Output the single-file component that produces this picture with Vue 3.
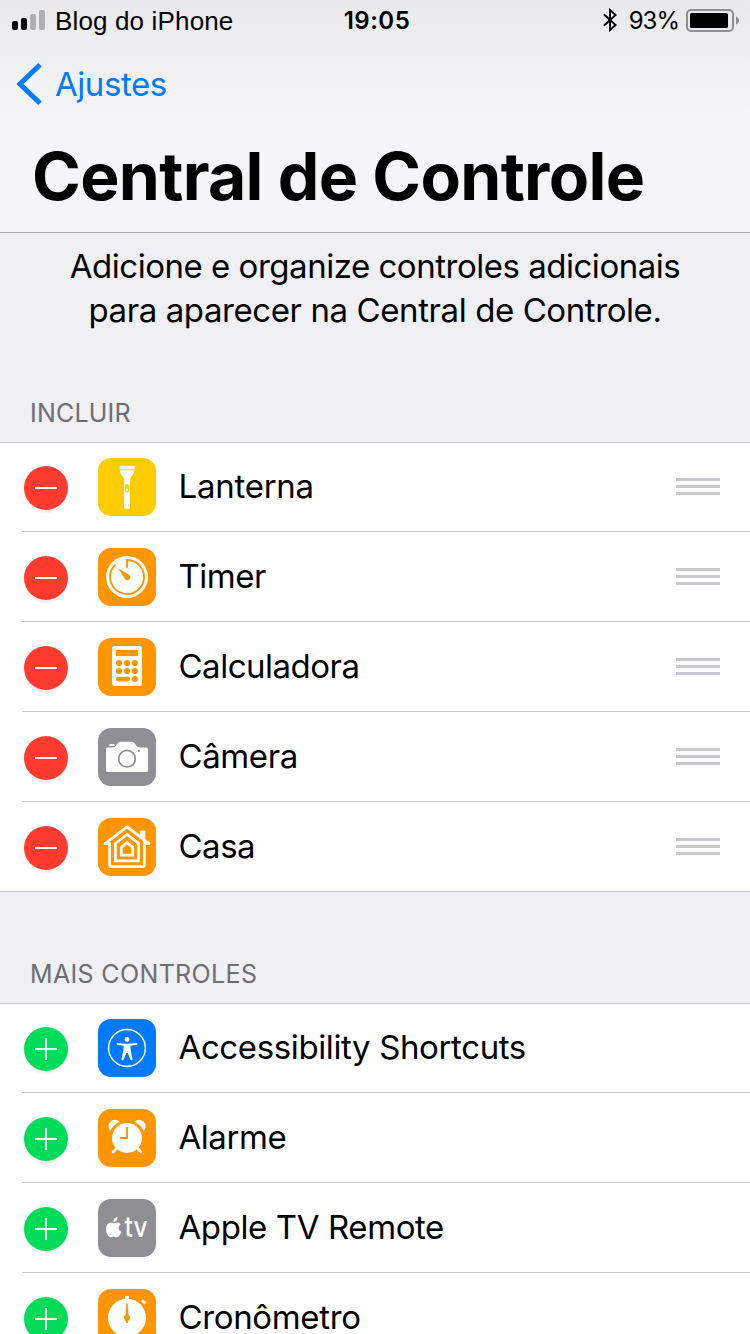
<template>
  <div class="screen">
    <header class="header">
      <div class="status-bar">
        <div class="status-left">
          <svg class="signal" width="33" height="20" viewBox="0 0 33 20">
            <rect x="0" y="11" width="6" height="9" rx="2" fill="#000" />
            <rect x="9" y="8" width="6" height="12" rx="2" fill="#000" />
            <rect x="18" y="4" width="6" height="16" rx="2" fill="#b0b0b2" />
            <rect x="27" y="0" width="6" height="20" rx="2" fill="#b0b0b2" />
          </svg>
          <span class="carrier">Blog do iPhone</span>
        </div>
        <span class="clock">19:05</span>
        <div class="status-right">
          <svg class="bluetooth" width="14" height="24" viewBox="0 0 14 24">
            <path d="M.8 6.2 12.6 17 7 22V2l5.6 5L.8 17.8" fill="none" stroke="#000" stroke-width="1.9" />
          </svg>
          <span class="percent">93%</span>
          <svg class="battery" width="53" height="23" viewBox="0 0 53 23">
            <rect x="1" y="1" width="46" height="21" rx="4" fill="none" stroke="#909092" stroke-width="2" />
            <rect x="4" y="4" width="38" height="15" rx="1.5" fill="#000" />
            <path d="M50 7.5c4 1.5 4 6.500 0 8z" fill="#909092" />
          </svg>
        </div>
      </div>
      <div class="nav-bar">
        <svg class="chevron" width="27" height="42" viewBox="0 0 27 42">
          <path d="M24 1.800 4 21 24 40.200" fill="none" stroke="#007aff" stroke-width="5" />
        </svg>
        <span class="back">Ajustes</span>
      </div>
      <h1 class="title">Central de Controle</h1>
    </header>

    <p class="intro">
      <span class="intro-first">Adicione e organize controles adicionais</span><br />
      <span class="intro-second">para aparecer na Central de Controle.</span>
    </p>

    <section v-for="section in sections" :key="section.title" class="section">
      <h2 class="section-title" :class="section.action">{{ section.title }}</h2>
      <ul class="list">
        <li v-for="item in section.items" :key="item.name" class="row">
          <span class="action" :class="section.action">
            <svg width="22" height="22" viewBox="0 0 22 22">
              <path :d="section.action === 'remove' ? 'M0 11h22' : 'M0 11h22M11 0v22'" stroke="#fff" stroke-width="2" />
            </svg>
          </span>

          <span class="app-icon" :class="item.color">
            <svg v-if="item.icon === 'flashlight'" viewBox="0 0 58 58" fill="#fff">
              <path d="M22.500 8h13.300q.9 0 .9.900v2.300H21.600V8.900q0-.9.900-.9z" />
              <path d="M21.800 12.300h14.700q-.3 2.500-2.200 4.900-2.300 2.700-2.300 4.800v27.500q0 1.200-1.200 1.200h-3.600q-1.200 0-1.200-1.200V22q0-2.100-2.200-4.800-1.800-2.400-2-4.900z" />
              <rect x="27" y="26" width="4" height="8.400" rx="2" fill="#fc0" />
              <circle cx="29" cy="31.800" r="1.300" />
            </svg>
            <svg v-else-if="item.icon === 'timer'" viewBox="0 0 58 58">
              <circle cx="29" cy="29" r="21" fill="#fff" />
              <path d="M29 19.800V12A17 17 0 1 1 17.400 16.600" fill="none" stroke="#ff9500" stroke-width="1.900" />
              <path d="M20.200 20.200 31.300 27.100A2.900 2.900 0 1 1 27.100 31.300z" fill="#ff9500" />
            </svg>
            <svg v-else-if="item.icon === 'calculator'" viewBox="0 0 58 58">
              <rect x="14" y="8" width="30" height="40" rx="2.500" fill="#fff" />
              <g fill="#ff9500">
                <rect x="17.800" y="12" width="22.200" height="6" rx=".5" />
                <template v-for="y in [25, 33]" :key="y">
                  <circle v-for="x in [21, 29, 36.800]" :key="x" :cx="x" :cy="y" r="3.100" />
                </template>
                <rect x="18" y="38.800" width="14" height="4.600" rx="2.300" />
                <circle cx="36.800" cy="41" r="3.100" />
              </g>
            </svg>
            <svg v-else-if="item.icon === 'camera'" viewBox="0 0 58 58">
              <path d="M9.500 19.500h5.500q2 0 3.200-1.900l1.600-2.300q1-1.500 3-1.500h10.800q2 0 3 1.500l1.600 2.300q1.200 1.900 3.200 1.900h7.100q1.500 0 1.500 1.500v21.500q0 1.500-1.500 1.500h-39Q8 44 8 42.500V21q0-1.500 1.500-1.500z" fill="#fff" />
              <path d="M11 18q0-2 1.700-2h3q1.300 0 1.300 2z" fill="#fff" />
              <circle cx="29" cy="30.700" r="8.300" fill="none" stroke="#8e8e93" stroke-width="1.700" />
              <circle cx="41" cy="23" r="1.100" fill="#8e8e93" />
            </svg>
            <svg v-else-if="item.icon === 'home'" viewBox="0 0 58 58" fill="none" stroke="#fff" stroke-width="2.700" stroke-linejoin="round">
              <path d="M42.200 19v-6h4.600v12z" fill="#fff" stroke-width=".8" />
              <path d="M11.600 25.600H7L29 8.900l22 16.700h-4.600v21.100q0 2-2 2H13.600q-2 0-2-2z" />
              <path d="M17.400 25.500 29 16.500l11.600 9v17.300H17.400z" stroke-linejoin="miter" />
              <path d="M23.300 29.300 29 24.600l5.700 4.700v7.900H23.300z" stroke-linejoin="miter" />
            </svg>
            <svg v-else-if="item.icon === 'accessibility'" viewBox="0 0 58 58" fill="#fff">
              <circle cx="29" cy="29" r="18.400" fill="none" stroke="#fff" stroke-width="1.500" />
              <circle cx="29" cy="20.400" r="2.400" />
              <path d="M19.500 24.100q9.500 1.200 19 0c1.100 0 1.200 1.500.2 1.700l-6.200 1q-.2 3.300.5 6.200l1.500 6.900c.2 1.400-1.500 1.700-2 .5L29.700 34h-1.400l-2.800 6.400c-.5 1.200-2.200.9-2-.5L25 33q.7-2.900.5-6.200l-6.200-1c-1-.2-.9-1.700.2-1.700z" />
            </svg>
            <svg v-else-if="item.icon === 'alarm'" viewBox="0 0 58 58">
              <circle cx="29" cy="29" r="15" fill="#fff" />
              <path d="M12.300 21.800A6.200 6.200 0 0 1 21.700 12.800Q15.500 15.800 12.300 21.800zM45.700 21.800A6.200 6.200 0 0 0 36.300 12.800Q42.500 15.800 45.700 21.800z" fill="#fff" />
              <path d="M18.500 39.500 15 43M39.500 39.500 43 43" stroke="#fff" stroke-width="2.600" stroke-linecap="round" />
              <path d="M29 18v11h-7" fill="none" stroke="#ff9500" stroke-width="1.800" />
            </svg>
            <svg v-else-if="item.icon === 'appletv'" viewBox="0 0 58 58" fill="#fff">
              <path d="M19.500 18q.2 2-1.100 3.500-1.300 1.500-3 1.400-.2-1.800 1.100-3.300 1.300-1.400 3-1.600z" />
              <path d="M22.800 25.300q-2.300 1.400-2.200 3.800.1 2.800 2.700 3.900-.7 2-1.900 3.600-1.200 1.700-2.600 1.700-.8 0-1.600-.4-1.500-.6-3 0-.8.400-1.500.4-1.500.1-2.800-1.800Q8 33.700 8 30q0-3.300 1.700-5 1.500-1.500 3.500-1.500.9 0 2 .5.8.3 1.600 0 1.200-.5 2.300-.5 2.400.1 3.700 1.800z" />
              <text x="26.600" y="37.800" textLength="23" lengthAdjust="spacingAndGlyphs" class="tv-text">tv</text>
            </svg>
            <svg v-else-if="item.icon === 'stopwatch'" viewBox="0 0 58 58">
              <circle cx="29" cy="28.800" r="19" fill="#fff" />
              <path d="M27 7h4v5h-4zM43 12.400l1.800-2 3.500 3-1.700 2.100z" fill="#fff" />
              <path d="M28.200 14.500h1.600l.5 11.400a3 3 0 0 1 .2 5.500L29.800 34h-1.600l-.7-2.600a3 3 0 0 1 .2-5.500z" fill="#ff9500" />
            </svg>
          </span>

          <span class="label" :style="{ letterSpacing: item.spacing + 'px' }">{{ item.name }}</span>
          <span v-if="section.action === 'remove'" class="grip">
            <i></i><i></i><i></i>
          </span>
        </li>
      </ul>
    </section>
  </div>
</template>

<script setup>
import { ref } from 'vue';

const sections = ref([
  {
    title: 'INCLUIR',
    action: 'remove',
    items: [
      { name: 'Lanterna', icon: 'flashlight', color: 'yellow', spacing: -0.25 },
      { name: 'Timer', icon: 'timer', color: 'orange', spacing: -0.5 },
      { name: 'Calculadora', icon: 'calculator', color: 'orange', spacing: -0.5 },
      { name: 'Câmera', icon: 'camera', color: 'gray', spacing: -0.4 },
      { name: 'Casa', icon: 'home', color: 'orange', spacing: -0.5 }
    ]
  },
  {
    title: 'MAIS CONTROLES',
    action: 'add',
    items: [
      { name: 'Accessibility Shortcuts', icon: 'accessibility', color: 'blue', spacing: -0.38 },
      { name: 'Alarme', icon: 'alarm', color: 'orange', spacing: -0.45 },
      { name: 'Apple TV Remote', icon: 'appletv', color: 'gray', spacing: -0.4 },
      { name: 'Cronômetro', icon: 'stopwatch', color: 'orange', spacing: -0.35 }
    ]
  }
]);
</script>

<style>
body {
  margin: 0;
  background: #efeff4;
}
</style>

<style scoped>
.screen {
  width: 750px;
  height: 1334px;
  overflow: hidden;
  background: #efeff4;
  color: #000;
  font-family: Inter, "Liberation Sans", sans-serif;
}

svg {
  display: block;
  flex: none;
}

.header {
  box-sizing: border-box;
  height: 233px;
  border-bottom: 1px solid #a9a9ae;
  background: linear-gradient(#e9e9eb 0, #f5f5f7 115px);
}

.status-bar {
  display: grid;
  grid-template-columns: 1fr auto 1fr;
  align-items: center;
  height: 40px;
  padding: 0 11px 0 12px;
}

.status-left,
.status-right {
  display: flex;
  align-items: center;
}

.status-right {
  justify-content: flex-end;
}

.carrier {
  margin-left: 10px;
  padding-top: 2px;
  font-family: "Liberation Sans", sans-serif;
  font-size: 26px;
  letter-spacing: 0.15px;
  line-height: 38px;
}

.clock {
  padding: 1px 0 0 3px;
  font-size: 24px;
  font-weight: 600;
  letter-spacing: 0.5px;
}

.percent {
  margin: 1px 7px 0 12px;
  font-size: 24px;
  letter-spacing: -1px;
}

.nav-bar {
  display: flex;
  align-items: center;
  height: 88px;
  padding-left: 16px;
}

.back {
  margin-left: 12px;
  color: #007aff;
  font-size: 33px;
  letter-spacing: -0.45px;
}

.title {
  margin: 8px 0 0 32px;
  font-size: 66px;
  font-weight: 700;
  letter-spacing: -0.68px;
  line-height: 80px;
}

.intro {
  margin: 0;
  height: 125px;
  padding-top: 11px;
  font-size: 33px;
  line-height: 44px;
  text-align: center;
}

.intro-first {
  letter-spacing: -0.48px;
}

.intro-second {
  letter-spacing: -0.41px;
}

.section-title {
  box-sizing: border-box;
  height: 73px;
  margin: 0;
  padding: 28px 0 0 30px;
  color: #6d6d72;
  font-size: 25px;
  font-weight: 400;
  letter-spacing: 0.2px;
  line-height: 32px;
}

.section-title.add {
  height: 111px;
  padding-top: 66px;
  letter-spacing: 0.35px;
}

.list {
  margin: 0;
  padding: 0;
  border-top: 1px solid #c8c7cc;
  background: #fff;
  list-style: none;
}

.row {
  display: flex;
  align-items: flex-end;
  box-sizing: border-box;
  height: 90px;
  margin-left: 22px;
  padding: 0 30px 15px 2px;
  border-bottom: 1px solid #c8c7cc;
}

.row:first-child {
  height: 89px;
}

.row:last-child {
  margin-left: 0;
  padding-left: 24px;
}

.action {
  display: flex;
  align-items: center;
  justify-content: center;
  width: 44px;
  height: 44px;
  margin-bottom: 6px;
  border-radius: 50%;
  box-shadow: 0 4px 2px -1px #f1f1f1;
}

.action.remove {
  background: #ff3b30;
}

.action.add {
  background: #00dc5a;
}

.app-icon {
  width: 58px;
  height: 58px;
  margin-left: 30px;
  border-radius: 13px;
}

.app-icon.yellow {
  background: #fc0;
}

.app-icon.orange {
  background: #ff9500;
}

.app-icon.gray {
  background: #8e8e93;
}

.app-icon.blue {
  background: #007aff;
}

.tv-text {
  font-size: 28px;
  font-weight: 500;
}

.label {
  margin: 0 0 1px 22.5px;
  font-size: 33px;
  line-height: 58px;
  white-space: nowrap;
}

.grip {
  display: flex;
  flex-direction: column;
  gap: 4px;
  width: 44px;
  margin: 0 0 21px auto;
}

.grip i {
  height: 3px;
  background: #c7c7cc;
}
</style>
